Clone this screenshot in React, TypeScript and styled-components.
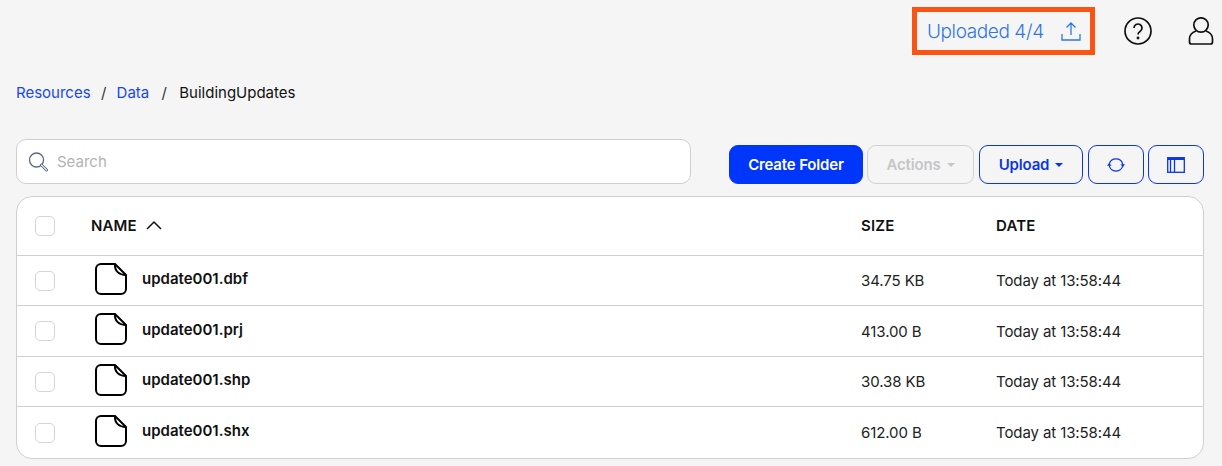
import React from 'react';
import styled, {createGlobalStyle} from 'styled-components';

const Global = createGlobalStyle`
  html, body {
    margin: 0;
    padding: 0;
    height: 466px;
    overflow: hidden;
    background: #f5f5f5;
    font-family: Inter, "Liberation Sans", sans-serif;
  }
  * { box-sizing: border-box; }
`;

const Page = styled.div`
  width: 1222px;
  height: 466px;
  padding: 7px 18px 0 16px;
  overflow: hidden;
`;

const TopBar = styled.header`
  display: flex;
  justify-content: flex-end;
  align-items: center;
  height: 48px;
  margin-right: -10px;
`;

const UploadStatus = styled.div`
  width: 183px;
  height: 48px;
  border: 5px solid #fa5414;
  display: flex;
  align-items: center;
  padding-left: 10px;
  color: #2f75e8;
  font-size: 19px;
  font-weight: 300;
  letter-spacing: -0.4px;

  > svg {
    margin-left: 17px;
  }
`;

const TopIcon = styled.span`
  display: flex;
  margin-left: ${p => p.$gap}px;
`;

const Crumbs = styled.nav`
  display: flex;
  align-items: center;
  margin-top: 27px;
  height: 20px;
  font-size: 15px;
  color: #111;
`;

const CrumbLink = styled.a`
  color: #1746f5;
`;

const CrumbSep = styled.span`
  width: ${p => p.$w}px;
  text-align: center;
  color: #333;
`;

const Toolbar = styled.div`
  display: flex;
  align-items: flex-end;
  justify-content: space-between;
  margin-top: 37px;
`;

const SearchBox = styled.div`
  width: 675px;
  height: 45px;
  background: #fff;
  border: 1px solid #cfcfcf;
  border-radius: 10px;
  display: flex;
  align-items: center;
  padding: 0 11px;
  gap: 9px;
  color: #b3b3b3;
  font-size: 15px;
`;

const Actions = styled.div`
  display: flex;
  gap: 4px;
`;

const Button = styled.button`
  height: 39px;
  width: ${p => p.$w}px;
  padding: 0;
  display: flex;
  align-items: center;
  justify-content: center;
  gap: 6px;
  border-radius: 9px;
  font: 600 15px Inter, "Liberation Sans", sans-serif;
  letter-spacing: -0.15px;
  background: ${p => (p.$variant === 'solid' ? '#0035fa' : '#f5f5f5')};
  color: ${p => (p.$variant === 'solid' ? '#fff' : p.$variant === 'off' ? '#c6c6c6' : '#0a35e8')};
  border: 1px solid ${p => (p.$variant === 'solid' ? '#0035fa' : p.$variant === 'off' ? '#d2d2d2' : '#0a35e8')};
  margin-left: ${p => p.$ml || 0}px;
`;

const Caret = styled.i`
  width: 0;
  height: 0;
  border-left: 4px solid transparent;
  border-right: 4px solid transparent;
  border-top: 4px solid currentColor;
`;

const Table = styled.div`
  margin-top: 12px;
  width: 1188px;
  height: 263px;
  background: #fff;
  border: 1px solid #d0d0d0;
  border-radius: 16px;
  overflow: hidden;
`;

const Row = styled.div`
  display: grid;
  grid-template-columns: 74px 770px 135px 1fr;
  align-items: center;
  height: ${p => p.$h}px;
  border-bottom: ${p => (p.$last ? 'none' : '1px solid #d0d0d0')};
`;

const HeadCell = styled.div`
  display: flex;
  align-items: center;
  gap: 9px;
  padding-bottom: 2px;
  font-size: 15px;
  font-weight: 600;
  letter-spacing: 0.15px;
  color: #111;
`;

const Check = styled.span`
  display: block;
  width: 20px;
  height: 20px;
  margin-left: 18px;
  border: 1px solid #d4d4d4;
  border-radius: 5px;
  background: #fff;
`;

const NameCell = styled.div`
  display: flex;
  align-items: center;
  gap: 14px;
  padding: 0 0 4px 3px;
  font-size: 15px;
  font-weight: 600;
  color: #111;
`;

const Cell = styled.div`
  font-size: 15px;
  letter-spacing: -0.1px;
  color: #222;
`;

const FileIcon = () => (
  <svg width="34" height="34" viewBox="0 0 34 34" fill="none" stroke="#000" strokeWidth="2" strokeLinejoin="round">
    <path d="M7 2h14l11 11v14a5 5 0 0 1-5 5H7a5 5 0 0 1-5-5V7a5 5 0 0 1 5-5z"/>
    <path d="M21 2c-.5 7 4 11 11 11"/>
  </svg>
);

const files = [
  {name: 'update001.dbf', size: '34.75 KB', h: 50},
  {name: 'update001.prj', size: '413.00 B', h: 51},
  {name: 'update001.shp', size: '30.38 KB', h: 50},
  {name: 'update001.shx', size: '612.00 B', h: 51},
];

export default function App() {
  return (
    <Page>
      <Global/>
      <TopBar>
        <UploadStatus>
          Uploaded 4/4
          <svg width="20" height="20" viewBox="0 0 20 20" fill="none" stroke="#2f75e8" strokeWidth="1.3">
            <path d="M10 14V2M5.500 6.500 10 2l4.500 4.500M1 13v6h18v-6"/>
          </svg>
        </UploadStatus>
        <TopIcon $gap={28}>
          <svg width="30" height="30" viewBox="0 0 30 30" fill="none" stroke="#111" strokeWidth="1.7">
            <circle cx="15" cy="15" r="13"/>
            <path d="M11 12a4 4 0 1 1 6 3.500c-1.300.8-2 1.500-2 3"/>
            <circle cx="15" cy="22" r=".6" fill="#111"/>
          </svg>
        </TopIcon>
        <TopIcon $gap={35}>
          <svg width="26" height="28" viewBox="0 0 26 28" fill="none" stroke="#111" strokeWidth="1.7">
            <circle cx="13" cy="8" r="7.200"/>
            <path d="M8 14C3.500 15.500 1.500 18.500 1.500 22v3a2 2 0 0 0 2 2h19a2 2 0 0 0 2-2v-3c0-3.500-2-6.500-6.500-8"/>
          </svg>
        </TopIcon>
      </TopBar>
      <Crumbs>
        <CrumbLink>Resources</CrumbLink>
        <CrumbSep $w={26}>/</CrumbSep>
        <CrumbLink>Data</CrumbLink>
        <CrumbSep $w={30}>/</CrumbSep>
        <span>BuildingUpdates</span>
      </Crumbs>
      <Toolbar>
        <SearchBox>
          <svg width="20" height="20" viewBox="0 0 20 20" fill="none">
            <circle cx="8.500" cy="8" r="7" stroke="#5b6a80" strokeWidth="1.300"/>
            <path d="m13.500 13 5 5" stroke="#5b6a80" strokeWidth="3" strokeLinecap="round"/>
            <path d="m13.500 13 5 5" stroke="#e8e8e8" strokeWidth="1.200" strokeLinecap="round"/>
          </svg>
          Search
        </SearchBox>
        <Actions>
          <Button $variant="solid" $w={134}>Create Folder</Button>
          <Button $variant="off" $w={107}>Actions <Caret/></Button>
          <Button $w={104} $ml={1}>Upload <Caret/></Button>
          <Button $w={56} $ml={1}>
            <svg width="18" height="16" viewBox="0 0 18 16" fill="none" stroke="#0a35e8" strokeWidth="1.200">
              <path d="M2.200 7.300A7 7 0 0 1 15.800 7.300"/>
              <path d="M15.800 8.700A7 7 0 0 1 2.200 8.700"/>
              <path d="M13.500 7.200h4.600l-2.300 3zM-.1 8.800h4.600l-2.300-3z" fill="#0a35e8" stroke="none"/>
            </svg>
          </Button>
          <Button $w={56}>
            <svg width="18" height="16" viewBox="0 0 18 16" fill="none" stroke="#0a35e8" strokeWidth="1.300">
              <rect x=".7" y=".7" width="16.600" height="14.600"/>
              <path d="M1 2h16" strokeWidth="2"/>
              <path d="M3.500 1v14M7.500 1v14"/>
            </svg>
          </Button>
        </Actions>
      </Toolbar>
      <Table>
        <Row $h={59}>
          <Check/>
          <HeadCell>
            NAME
            <svg width="16" height="10" viewBox="0 0 16 10" fill="none" stroke="#111" strokeWidth="1.500"><path d="m1 9 7-7 7 7"/></svg>
          </HeadCell>
          <HeadCell>SIZE</HeadCell>
          <HeadCell>DATE</HeadCell>
        </Row>
        {files.map((f, i) => (
          <Row key={f.name} $h={f.h} $last={i === files.length - 1}>
            <Check/>
            <NameCell><FileIcon/>{f.name}</NameCell>
            <Cell>{f.size}</Cell>
            <Cell>Today at 13:58:44</Cell>
          </Row>
        ))}
      </Table>
    </Page>
  );
}
